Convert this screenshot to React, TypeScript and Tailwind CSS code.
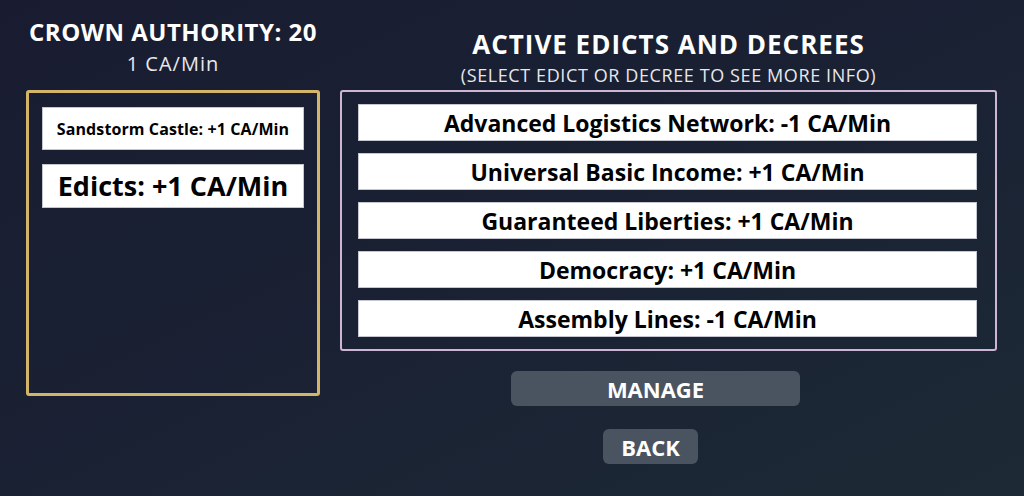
const edicts = [
  "Advanced Logistics Network: -1 CA/Min",
  "Universal Basic Income: +1 CA/Min",
  "Guaranteed Liberties: +1 CA/Min",
  "Democracy: +1 CA/Min",
  "Assembly Lines: -1 CA/Min",
];

export default function App() {
  return (
    <div
      className="flex h-[496px] w-full overflow-hidden bg-gradient-to-br from-[#191c31] via-[#1a2133] to-[#1c2a35] text-white"
      style={{ fontFamily: "'Open Sans', 'Noto Sans', sans-serif" }}
    >
      <div className="ml-[26px] flex w-[294px] flex-col">
        <div className="h-[90px] pt-[18px] text-center">
          <div className="text-[24px] font-bold leading-[28px] tracking-[0.5px]">CROWN AUTHORITY: 20</div>
          <div className="mt-[6px] text-[20px] leading-[24px] tracking-[1px] text-[#e8e8ec]">1 CA/Min</div>
        </div>
        <div className="flex h-[306px] flex-col gap-[14px] rounded-[3px] border-[3px] border-[#d3b468] px-[13px] pt-[14px]">
          <div className="flex h-[43px] items-center justify-center border border-[#c4c7cf] bg-white text-[16px] font-bold tracking-[0.1px] text-black">
            Sandstorm Castle: +1 CA/Min
          </div>
          <div className="flex h-[44px] items-center justify-center border border-[#c4c7cf] bg-white text-[27px] font-bold text-black">
            Edicts: +1 CA/Min
          </div>
        </div>
      </div>

      <div className="ml-[20px] flex w-[657px] flex-col">
        <div className="h-[90px] pt-[29px] text-center">
          <div className="text-[26px] font-bold leading-[30px] tracking-[1px]">ACTIVE EDICTS AND DECREES</div>
          <div className="mt-[5px] text-[18px] leading-[22px] tracking-[0.6px] text-[#e8e8ec]">(SELECT EDICT OR DECREE TO SEE MORE INFO)</div>
        </div>
        <div className="flex h-[261px] flex-col gap-[12px] rounded-[3px] border-2 border-[#cdb5d6] pl-[16px] pr-[18px] pt-[12px]">
          {edicts.map((e) => (
            <div
              key={e}
              className="flex h-[37px] items-center justify-center border border-[#c4c7cf] bg-white pt-[2px] text-[23px] font-bold text-black"
            >
              {e}
            </div>
          ))}
        </div>
        <button className="ml-[171px] mt-[20px] h-[35px] w-[289px] rounded-[6px] bg-[#4a5460] pt-[1px] text-[22px] font-bold text-white">
          MANAGE
        </button>
        <button className="ml-[263px] mt-[23px] h-[35px] w-[95px] rounded-[6px] bg-[#4a5460] pt-[1px] text-[22px] font-bold text-white">
          BACK
        </button>
      </div>
    </div>
  );
}
